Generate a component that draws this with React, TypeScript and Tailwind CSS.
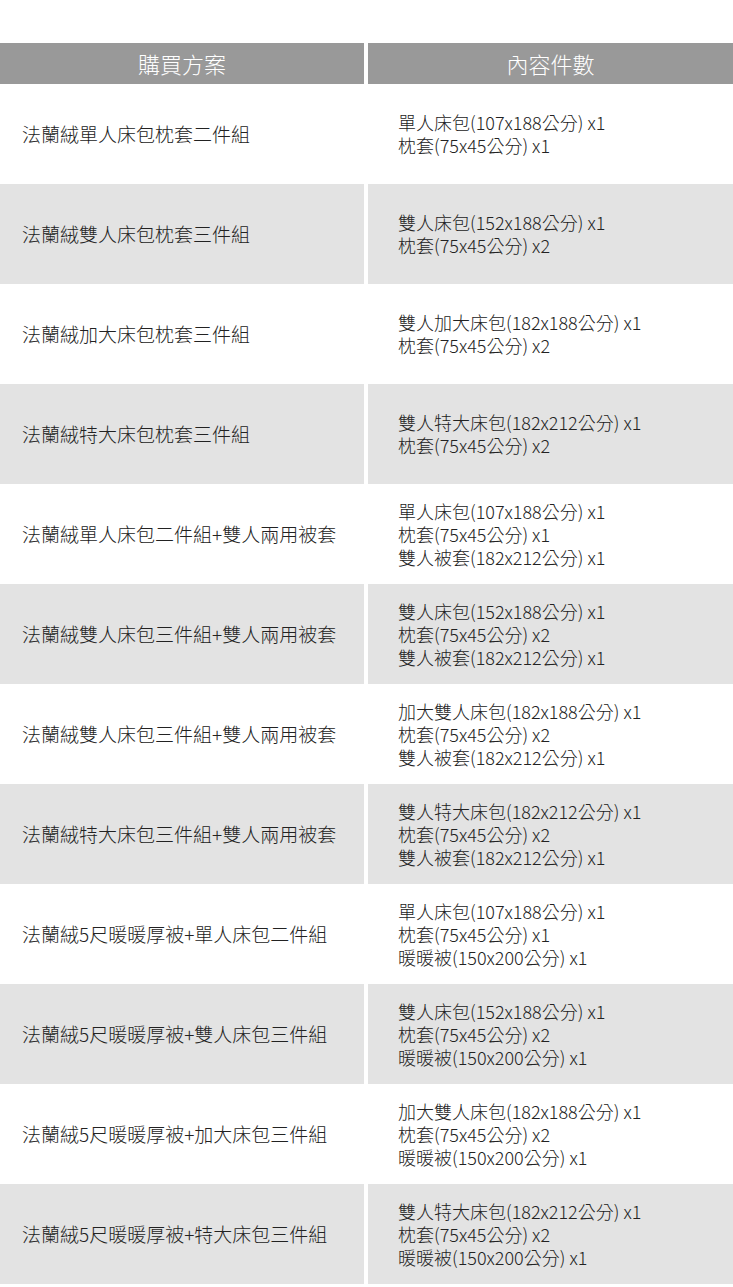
const rows: { name: string; items: string[] }[] = [
  { name: "法蘭絨單人床包枕套二件組", items: ["單人床包(107x188公分) x1", "枕套(75x45公分) x1"] },
  { name: "法蘭絨雙人床包枕套三件組", items: ["雙人床包(152x188公分) x1", "枕套(75x45公分) x2"] },
  { name: "法蘭絨加大床包枕套三件組", items: ["雙人加大床包(182x188公分) x1", "枕套(75x45公分) x2"] },
  { name: "法蘭絨特大床包枕套三件組", items: ["雙人特大床包(182x212公分) x1", "枕套(75x45公分) x2"] },
  {
    name: "法蘭絨單人床包二件組+雙人兩用被套",
    items: ["單人床包(107x188公分) x1", "枕套(75x45公分) x1", "雙人被套(182x212公分) x1"],
  },
  {
    name: "法蘭絨雙人床包三件組+雙人兩用被套",
    items: ["雙人床包(152x188公分) x1", "枕套(75x45公分) x2", "雙人被套(182x212公分) x1"],
  },
  {
    name: "法蘭絨雙人床包三件組+雙人兩用被套",
    items: ["加大雙人床包(182x188公分) x1", "枕套(75x45公分) x2", "雙人被套(182x212公分) x1"],
  },
  {
    name: "法蘭絨特大床包三件組+雙人兩用被套",
    items: ["雙人特大床包(182x212公分) x1", "枕套(75x45公分) x2", "雙人被套(182x212公分) x1"],
  },
  {
    name: "法蘭絨5尺暖暖厚被+單人床包二件組",
    items: ["單人床包(107x188公分) x1", "枕套(75x45公分) x1", "暖暖被(150x200公分) x1"],
  },
  {
    name: "法蘭絨5尺暖暖厚被+雙人床包三件組",
    items: ["雙人床包(152x188公分) x1", "枕套(75x45公分) x2", "暖暖被(150x200公分) x1"],
  },
  {
    name: "法蘭絨5尺暖暖厚被+加大床包三件組",
    items: ["加大雙人床包(182x188公分) x1", "枕套(75x45公分) x2", "暖暖被(150x200公分) x1"],
  },
  {
    name: "法蘭絨5尺暖暖厚被+特大床包三件組",
    items: ["雙人特大床包(182x212公分) x1", "枕套(75x45公分) x2", "暖暖被(150x200公分) x1"],
  },
];

export default function App() {
  return (
    <div className="min-h-screen bg-white pt-[43px] font-['Noto_Sans_CJK_TC','Noto_Sans',sans-serif] font-light text-[#222]">
      <div className="grid grid-cols-[364px_1fr] gap-x-[4px]">
        {/* header */}
        <div className="flex h-[41px] items-center justify-center bg-[#999999] text-[22px] text-white">購買方案</div>
        <div className="flex h-[41px] items-center justify-center bg-[#999999] text-[22px] text-white">內容件數</div>

        {rows.map((row, i) => {
          const bg = i % 2 === 1 ? "bg-[#e3e3e3]" : "bg-white";
          return (
            <div key={i} className="contents">
              <div className={`flex h-[100px] items-center pl-[22px] text-[19px] ${bg}`}>{row.name}</div>
              <div className={`flex h-[100px] flex-col justify-center pl-[30px] text-[18px] leading-[23px] ${bg}`}>
                {row.items.map((item, j) => (
                  <div key={j}>{item}</div>
                ))}
              </div>
            </div>
          );
        })}
      </div>
    </div>
  );
}
